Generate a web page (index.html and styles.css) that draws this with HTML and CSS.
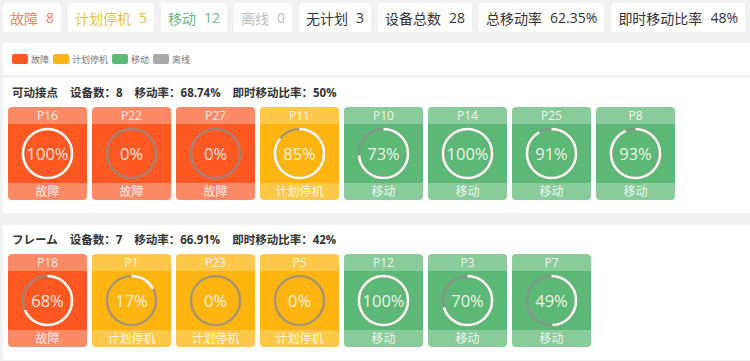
FILE: index.html
```html
<!DOCTYPE html>
<html>
  <head>
    <meta charset="utf-8">
    <title>设备状态</title>
    <link rel="stylesheet" href="styles.css">
  </head>
  <body>

    <div class="stats">
      <div class="stat st-fault">故障<span>8</span></div>
      <div class="stat st-plan">计划停机<span>5</span></div>
      <div class="stat st-run">移动<span>12</span></div>
      <div class="stat st-off">离线<span>0</span></div>
      <div class="stat">无计划<span>3</span></div>
      <div class="stat">设备总数<span>28</span></div>
      <div class="stat">总移动率<span>62.35%</span></div>
      <div class="stat">即时移动比率<span>48%</span></div>
    </div>

    <div class="legend">
      <i class="sw fault"></i>故障
      <i class="sw plan"></i>计划停机
      <i class="sw run"></i>移动
      <i class="sw off"></i>离线
    </div>

    <div class="panel">
      <div class="ptitle">可动接点<span>设备数：8</span><span>移动率：68.74%</span><span>即时移动比率：50%</span></div>
      <div class="cards">
        <div class="card fault"><div class="ch">P16</div><div class="cb"><svg viewBox="0 0 56 56"><circle class="bg" cx="28" cy="28" r="25"/><circle class="fg" cx="28" cy="28" r="25" style="stroke-dasharray: 157.1 158"/></svg><b>100%</b></div><div class="cf">故障</div></div>
        <div class="card fault"><div class="ch">P22</div><div class="cb"><svg viewBox="0 0 56 56"><circle class="bg" cx="28" cy="28" r="25"/></svg><b>0%</b></div><div class="cf">故障</div></div>
        <div class="card fault"><div class="ch">P27</div><div class="cb"><svg viewBox="0 0 56 56"><circle class="bg" cx="28" cy="28" r="25"/></svg><b>0%</b></div><div class="cf">故障</div></div>
        <div class="card plan"><div class="ch">P11</div><div class="cb"><svg viewBox="0 0 56 56"><circle class="bg" cx="28" cy="28" r="25"/><circle class="fg" cx="28" cy="28" r="25" style="stroke-dasharray: 133.5 158"/></svg><b>85%</b></div><div class="cf">计划停机</div></div>
        <div class="card run"><div class="ch">P10</div><div class="cb"><svg viewBox="0 0 56 56"><circle class="bg" cx="28" cy="28" r="25"/><circle class="fg" cx="28" cy="28" r="25" style="stroke-dasharray: 114.7 158"/></svg><b>73%</b></div><div class="cf">移动</div></div>
        <div class="card run"><div class="ch">P14</div><div class="cb"><svg viewBox="0 0 56 56"><circle class="bg" cx="28" cy="28" r="25"/><circle class="fg" cx="28" cy="28" r="25" style="stroke-dasharray: 157.1 158"/></svg><b>100%</b></div><div class="cf">移动</div></div>
        <div class="card run"><div class="ch">P25</div><div class="cb"><svg viewBox="0 0 56 56"><circle class="bg" cx="28" cy="28" r="25"/><circle class="fg" cx="28" cy="28" r="25" style="stroke-dasharray: 143 158"/></svg><b>91%</b></div><div class="cf">移动</div></div>
        <div class="card run"><div class="ch">P8</div><div class="cb"><svg viewBox="0 0 56 56"><circle class="bg" cx="28" cy="28" r="25"/><circle class="fg" cx="28" cy="28" r="25" style="stroke-dasharray: 146.1 158"/></svg><b>93%</b></div><div class="cf">移动</div></div>
      </div>
    </div>

    <div class="panel">
      <div class="ptitle">フレーム<span>设备数：7</span><span>移动率：66.91%</span><span>即时移动比率：42%</span></div>
      <div class="cards">
        <div class="card fault"><div class="ch">P18</div><div class="cb"><svg viewBox="0 0 56 56"><circle class="bg" cx="28" cy="28" r="25"/><circle class="fg" cx="28" cy="28" r="25" style="stroke-dasharray: 106.8 158"/></svg><b>68%</b></div><div class="cf">故障</div></div>
        <div class="card plan"><div class="ch">P1</div><div class="cb"><svg viewBox="0 0 56 56"><circle class="bg" cx="28" cy="28" r="25"/><circle class="fg" cx="28" cy="28" r="25" style="stroke-dasharray: 26.7 158"/></svg><b>17%</b></div><div class="cf">计划停机</div></div>
        <div class="card plan"><div class="ch">P23</div><div class="cb"><svg viewBox="0 0 56 56"><circle class="bg" cx="28" cy="28" r="25"/></svg><b>0%</b></div><div class="cf">计划停机</div></div>
        <div class="card plan"><div class="ch">P5</div><div class="cb"><svg viewBox="0 0 56 56"><circle class="bg" cx="28" cy="28" r="25"/></svg><b>0%</b></div><div class="cf">计划停机</div></div>
        <div class="card run"><div class="ch">P12</div><div class="cb"><svg viewBox="0 0 56 56"><circle class="bg" cx="28" cy="28" r="25"/><circle class="fg" cx="28" cy="28" r="25" style="stroke-dasharray: 157.1 158"/></svg><b>100%</b></div><div class="cf">移动</div></div>
        <div class="card run"><div class="ch">P3</div><div class="cb"><svg viewBox="0 0 56 56"><circle class="bg" cx="28" cy="28" r="25"/><circle class="fg" cx="28" cy="28" r="25" style="stroke-dasharray: 110 158"/></svg><b>70%</b></div><div class="cf">移动</div></div>
        <div class="card run"><div class="ch">P7</div><div class="cb"><svg viewBox="0 0 56 56"><circle class="bg" cx="28" cy="28" r="25"/><circle class="fg" cx="28" cy="28" r="25" style="stroke-dasharray: 77 158"/></svg><b>49%</b></div><div class="cf">移动</div></div>
      </div>
    </div>

  </body>
</html>
```

FILE: styles.css
```css
body {
  margin: 0;
  padding: 3px 0 0 3px;
  background: #f1f1f1;
  font-family: "Open Sans", "Noto Sans CJK SC", sans-serif;
  color: #333;
  overflow: hidden;
}

/* top counters */
.stats { display: flex; gap: 7px; }
.stat {
  display: flex;
  align-items: center;
  height: 29px;
  padding: 0 7px;
  background: #fff;
  border-radius: 3px;
  font-size: 14px;
  color: #333;
  white-space: nowrap;
}
.stat span { margin-left: 8px; }
.st-fault { color: #e98663; }
.st-plan { color: #e8bf4c; }
.st-run { color: #6bb785; }
.st-off { color: #bdbdbd; }

/* legend */
.legend {
  display: flex;
  align-items: center;
  height: 32px;
  margin-top: 11px;
  padding-left: 9px;
  background: #fff;
  font-size: 9px;
  color: #777;
}
.sw { width: 16px; height: 10px; border-radius: 2px; margin: 0 3px 0 4px; }
.sw.fault { background: #fd5722; margin-left: 0; }
.sw.plan { background: #fdb514; }
.sw.run { background: #5cb878; }
.sw.off { background: #aaa; }

/* sections */
.panel {
  background: #fff;
  margin-top: 3px;
  padding: 7px 5px 13px;
}
.panel + .panel { margin-top: 12px; }
.ptitle {
  font-size: 11.5px;
  font-weight: bold;
  color: #333;
  height: 22px;
  line-height: 16px;
  padding-left: 4px;
}
.ptitle span { margin-left: 12px; }

.cards { display: flex; gap: 5px; }
.card {
  width: 79px;
  height: 93px;
  border-radius: 4px;
  overflow: hidden;
  display: flex;
  flex-direction: column;
  color: rgba(255, 255, 255, 0.88);
}
.ch, .cf {
  height: 17px;
  line-height: 17px;
  text-align: center;
  font-size: 12px;
}
.cb {
  flex: 1;
  position: relative;
  display: flex;
  align-items: center;
  justify-content: center;
}
.cb svg { width: 55px; height: 55px; transform: rotate(-90deg); }
.cb b {
  position: absolute;
  inset: 0;
  display: flex;
  align-items: center;
  justify-content: center;
  font-weight: normal;
  font-size: 16.5px;
  color: rgba(255, 250, 240, 0.92);
}
.bg { fill: none; stroke: rgba(140, 140, 140, 0.75); stroke-width: 2.6; }
.fg { fill: none; stroke: #fffaf2; stroke-width: 2.6; }

.card.fault .cb { background: #fd5722; }
.card.fault .ch, .card.fault .cf { background: #fd8a67; }
.card.plan .cb { background: #feb511; }
.card.plan .ch, .card.plan .cf { background: #fec94b; }
.card.run .cb { background: #5db877; }
.card.run .ch, .card.run .cf { background: #8acb9c; }
```
